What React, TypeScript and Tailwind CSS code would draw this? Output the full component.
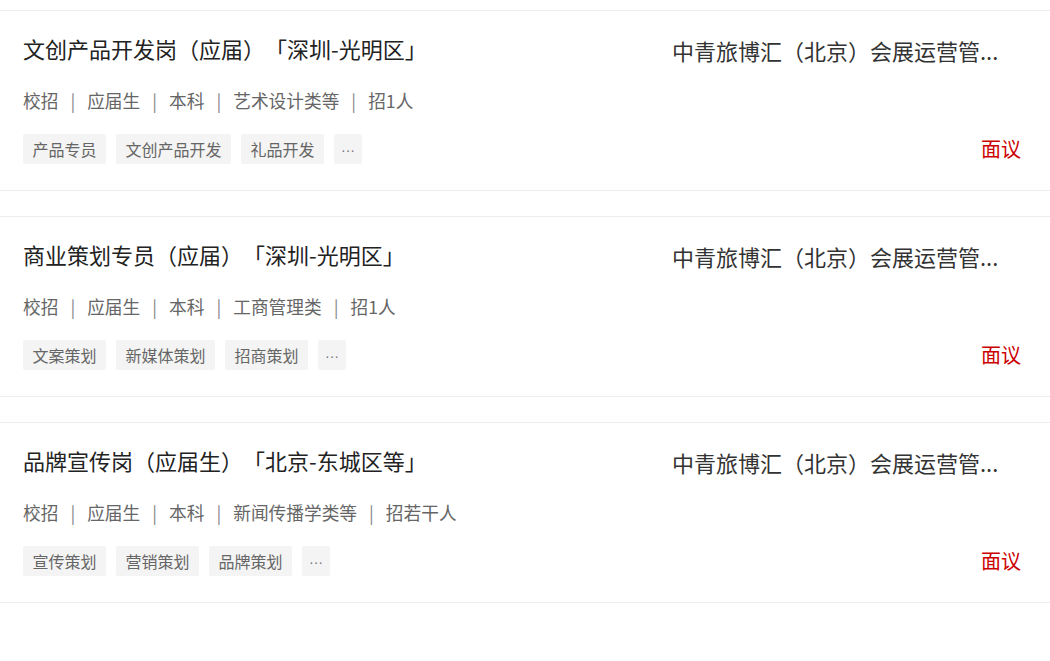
const jobs = [
  {
    title: '文创产品开发岗（应届）「深圳-光明区」',
    meta: ['校招', '应届生', '本科', '艺术设计类等', '招1人'],
    tags: ['产品专员', '文创产品开发', '礼品开发'],
  },
  {
    title: '商业策划专员（应届）「深圳-光明区」',
    meta: ['校招', '应届生', '本科', '工商管理类', '招1人'],
    tags: ['文案策划', '新媒体策划', '招商策划'],
  },
  {
    title: '品牌宣传岗（应届生）「北京-东城区等」',
    meta: ['校招', '应届生', '本科', '新闻传播学类等', '招若干人'],
    tags: ['宣传策划', '营销策划', '品牌策划'],
  },
]

// the list shows the company name already cut down
const company = '中青旅博汇（北京）会展运营管...'

function JobCard({ job }: { job: (typeof jobs)[number] }) {
  return (
    <div className="mb-[25px] flex h-[181px] border-y border-[#ececec] pl-[23px] pr-[29px]">
      <div className="flex min-w-0 flex-1 flex-col pt-[22px]">
        <div className="text-[22px] leading-[30px] text-[#222]">{job.title}</div>
        <div className="mt-[25px] flex items-center text-[17.7px] leading-[24px] text-[#666]">
          {job.meta.map((item, index) => (
            <span key={item} className="flex items-center">
              {index > 0 && <span className="mx-[12px] text-[#888]">|</span>}
              {item}
            </span>
          ))}
        </div>
        <div className="mt-[22px] flex gap-[10px]">
          {job.tags.map((tag) => (
            <span key={tag} className="h-[30px] rounded-[2px] bg-[#f4f4f4] px-[9.5px] text-[16px] leading-[30px] text-[#666]">{tag}</span>
          ))}
          <span className="flex h-[30px] w-[28px] items-center justify-center rounded-[2px] bg-[#f4f4f4] pt-[2px] font-['Liberation_Sans',sans-serif] text-[14px] leading-none text-[#777]">···</span>
        </div>
      </div>
      <div className="flex w-[349px] shrink-0 flex-col items-end pt-[24px]">
        <div className="w-full whitespace-nowrap text-[22px] leading-[30px] text-[#333]">{company}</div>
        <div className="mt-auto mb-[29px] text-[20px] leading-[24px] text-[#cc0000]">面议</div>
      </div>
    </div>
  )
}

export default function App() {
  return (
    <div
      className="min-h-[661px] w-[1050px] bg-white pt-[10px] [text-spacing-trim:space-all]"
      style={{ fontFamily: '"Noto Sans CJK SC", "Noto Sans", sans-serif' }}
    >
      {jobs.map((job) => (
        <JobCard key={job.title} job={job} />
      ))}
    </div>
  )
}
